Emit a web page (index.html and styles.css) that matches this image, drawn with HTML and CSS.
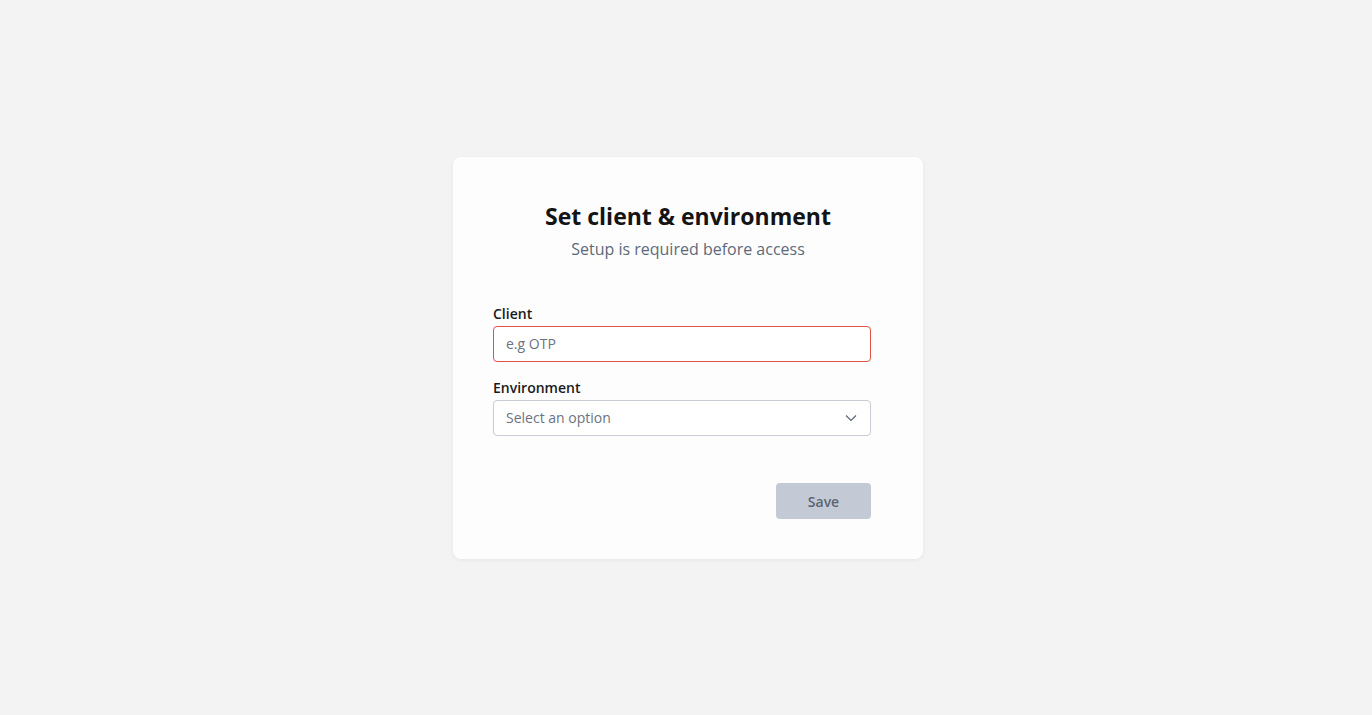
FILE: index.html
```html
<!DOCTYPE html>
<html>
<head>
<meta charset="utf-8">
<link rel="stylesheet" href="styles.css">
</head>
<body>
<main class="page">
  <section class="card">
    <h1 class="title">Set client &amp; environment</h1>
    <p class="subtitle">Setup is required before access</p>
    <form class="form">
      <div class="field">
        <label class="label">Client</label>
        <div class="input input-error"><span class="placeholder">e.g OTP</span></div>
      </div>
      <div class="field">
        <label class="label">Environment</label>
        <div class="input select">
          <span class="placeholder">Select an option</span>
          <svg class="chev" width="12" height="8" viewBox="0 0 12 8"><path d="M1 1.5 L6 6.5 L11 1.5" fill="none" stroke="#5b6573" stroke-width="1.2"/></svg>
        </div>
      </div>
      <div class="actions">
        <button type="button" class="btn">Save</button>
      </div>
    </form>
  </section>
</main>
</body>
</html>
```
FILE: styles.css
```css
html, body { margin: 0; padding: 0; }
body {
  background: #f3f3f3;
  font-family: "Open Sans", "Noto Sans", sans-serif;
  width: 1372px;
  height: 715px;
}
.page {
  height: 715px;
  box-sizing: border-box;
  padding-left: 4px;
  display: flex;
  justify-content: center;
  align-items: flex-start;
}
.card {
  margin-top: 157px;
  width: 470px;
  height: 402px;
  box-sizing: border-box;
  background: #fdfdfe;
  border-radius: 8px;
  box-shadow: 0 1px 4px rgba(0,0,0,0.06);
  padding: 44px 40px 0;
  display: flex;
  flex-direction: column;
  align-items: stretch;
}
.title {
  margin: 0;
  text-align: center;
  font-size: 23px;
  font-weight: 700;
  line-height: 30px;
  color: #141414;
}
.subtitle {
  margin: 6px 0 0;
  text-align: center;
  font-size: 16px;
  line-height: 24px;
  color: #5e6a79;
}
.form {
  width: 378px;
  margin-top: 43px;
  display: flex;
  flex-direction: column;
}
.field { display: flex; flex-direction: column; margin-bottom: 16px; }
.label {
  font-size: 14px;
  font-weight: 600;
  line-height: 20px;
  color: #1a1a1a;
  margin-bottom: 2px;
}
.input {
  height: 36px;
  box-sizing: border-box;
  border: 1px solid #c9ccd3;
  border-radius: 4px;
  padding: 0 12px 2px;
  display: flex;
  align-items: center;
  justify-content: space-between;
  background: #ffffff;
}
.input-error { border-color: #e0534b; }
.placeholder {
  font-size: 14px;
  color: #6a7381;
}
.chev { margin-right: 1px; margin-top: 2px; }
.actions {
  display: flex;
  justify-content: flex-end;
  margin-top: 31px;
}
.btn {
  width: 95px;
  height: 36px;
  border: none;
  border-radius: 4px;
  background: #c4cad5;
  color: #5b6573;
  font-family: inherit;
  font-size: 14px;
  font-weight: 600;
}
```
